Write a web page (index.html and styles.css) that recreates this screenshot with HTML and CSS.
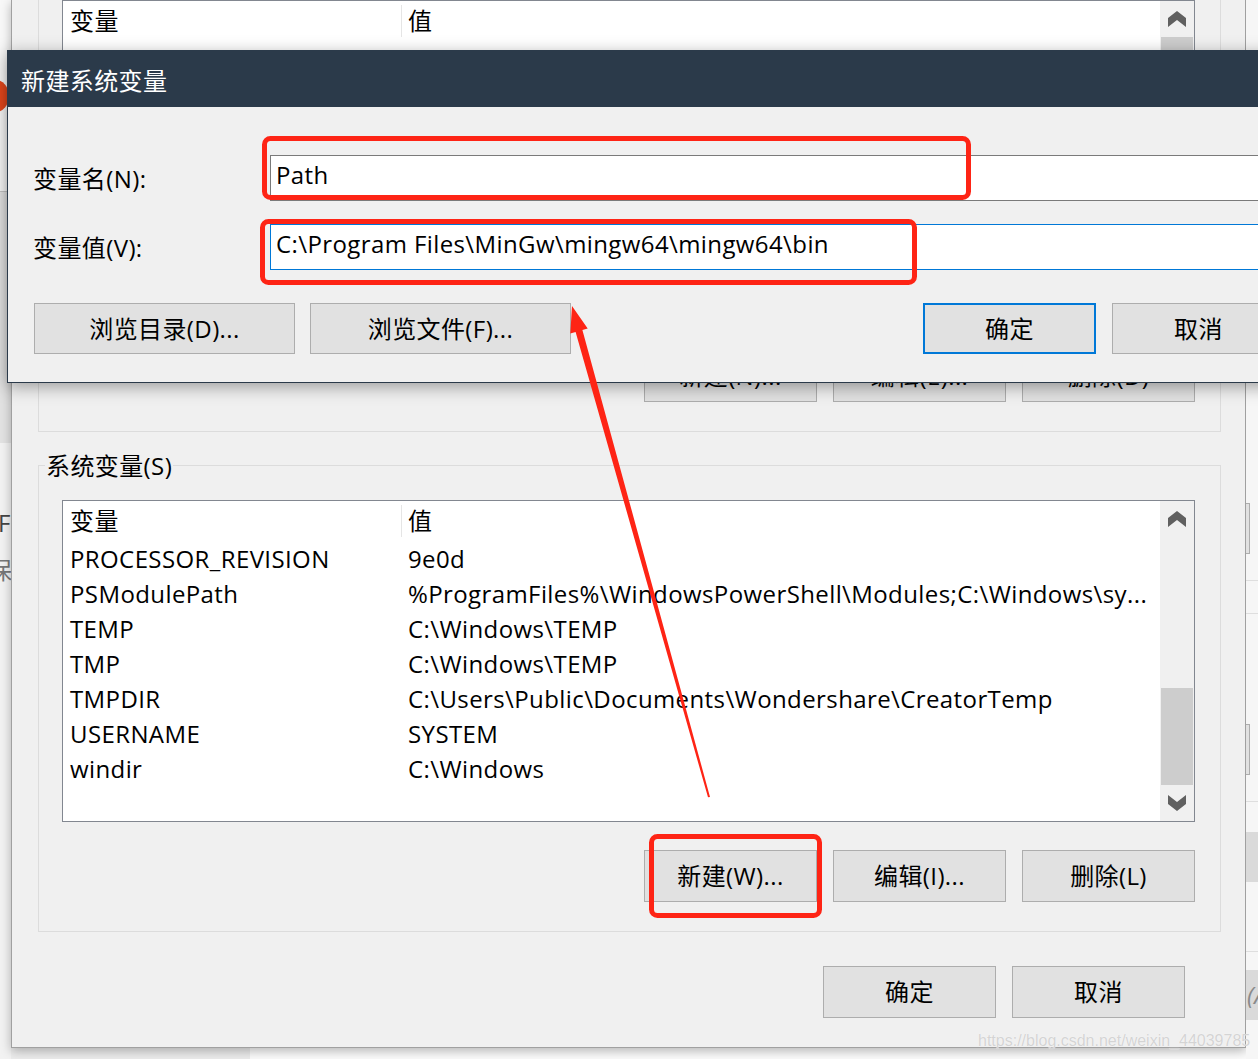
FILE: index.html
```html
<!DOCTYPE html>
<html lang="zh-CN">
<head>
  <meta charset="UTF-8">
  <meta name="viewport" content="width=device-width, initial-scale=1.0">
  <title>新建系统变量</title>
  <link rel="stylesheet" href="styles.css">
</head>
<body>

<div class="desk">

  <!-- fenêtre derrière, à gauche -->
  <div class="side side-left">
    <div class="sl-top"><span class="sl-dot"></span></div>
    <div class="sl-mid"></div>
    <div class="sl-bottom">
      <span class="sl-text">F</span>
      <span class="sl-text sl-cut">保</span>
    </div>
  </div>

  <!-- fenêtre "环境变量" -->
  <div class="env-window">

    <div class="group group-user">
      <div class="list">
        <div class="list-body">
          <div class="list-head">
            <span class="col-name">变量</span>
            <span class="col-value">值</span>
          </div>
          <div class="row"></div>
        </div>
        <div class="scrollbar">
          <div class="sb-btn">
            <svg width="18" height="16" viewBox="0 0 18 16"><polygon points="0,7 9,0 18,7 18,16 9,9 0,16" fill="#606060"/></svg>
          </div>
          <div class="sb-track">
            <div class="sb-thumb thumb-user"></div>
          </div>
        </div>
      </div>
      <div class="btn-row">
        <button class="btn">新建(N)...</button>
        <button class="btn">编辑(E)...</button>
        <button class="btn">删除(D)</button>
      </div>
    </div>

    <div class="group group-sys">
      <div class="group-title">系统变量(S)</div>
      <div class="list">
        <div class="list-body">
          <div class="list-head">
            <span class="col-name">变量</span>
            <span class="col-value">值</span>
          </div>
          <div class="row">
            <span class="col-name">PROCESSOR_REVISION</span>
            <span class="col-value">9e0d</span>
          </div>
          <div class="row">
            <span class="col-name">PSModulePath</span>
            <span class="col-value">%ProgramFiles%\WindowsPowerShell\Modules;C:\Windows\sy...</span>
          </div>
          <div class="row">
            <span class="col-name">TEMP</span>
            <span class="col-value">C:\Windows\TEMP</span>
          </div>
          <div class="row">
            <span class="col-name">TMP</span>
            <span class="col-value">C:\Windows\TEMP</span>
          </div>
          <div class="row">
            <span class="col-name">TMPDIR</span>
            <span class="col-value">C:\Users\Public\Documents\Wondershare\CreatorTemp</span>
          </div>
          <div class="row">
            <span class="col-name">USERNAME</span>
            <span class="col-value">SYSTEM</span>
          </div>
          <div class="row">
            <span class="col-name">windir</span>
            <span class="col-value">C:\Windows</span>
          </div>
        </div>
        <div class="scrollbar">
          <div class="sb-btn">
            <svg width="18" height="16" viewBox="0 0 18 16"><polygon points="0,7 9,0 18,7 18,16 9,9 0,16" fill="#606060"/></svg>
          </div>
          <div class="sb-track sb-end">
            <div class="sb-thumb" style="height: 97px;"></div>
          </div>
          <div class="sb-btn">
            <svg width="18" height="16" viewBox="0 0 18 16"><polygon points="0,0 9,7 18,0 18,9 9,16 0,9" fill="#606060"/></svg>
          </div>
        </div>
      </div>
      <div class="btn-row">
        <button class="btn">新建(W)...</button>
        <button class="btn">编辑(I)...</button>
        <button class="btn">删除(L)</button>
      </div>
    </div>

    <div class="footer">
      <button class="btn">确定</button>
      <button class="btn">取消</button>
    </div>
  </div>

  <!-- fenêtre derrière, à droite -->
  <div class="side side-right">
    <div class="sr-box sr-b1"></div>
    <div class="sr-line sr-l1"></div>
    <div class="sr-line sr-l2"></div>
    <div class="sr-box sr-b2"></div>
    <div class="sr-line sr-l3"></div>
    <div class="sr-band sr-g1"></div>
    <div class="sr-line sr-l4"></div>
    <div class="sr-band sr-g2"><span>(A</span></div>
  </div>

  <!-- boîte de dialogue "新建系统变量" -->
  <div class="dialog">
    <div class="dialog-title">新建系统变量</div>
    <div class="dialog-body">
      <div class="field">
        <span class="field-label">变量名(N):</span>
        <div class="field-box">Path</div>
      </div>
      <div class="field">
        <span class="field-label">变量值(V):</span>
        <div class="field-box focus">C:\Program Files\MinGw\mingw64\mingw64\bin</div>
      </div>
      <div class="dialog-actions">
        <button class="btn btn-wide">浏览目录(D)...</button>
        <button class="btn btn-wide">浏览文件(F)...</button>
        <button class="btn btn-ok">确定</button>
        <button class="btn btn-cancel">取消</button>
      </div>
    </div>
  </div>

  <div class="watermark">https://blog.csdn.net/weixin_44039785</div>

  <!-- annotations rouges -->
  <svg class="marks" width="1258" height="1059" viewBox="0 0 1258 1059">
    <rect x="264.5" y="138.5" width="704" height="59" rx="6" />
    <rect x="262.5" y="221.5" width="652" height="61" rx="6" />
    <rect x="651.5" y="836.5" width="168" height="79" rx="6" />
    <polygon class="arrow" points="710,797 582.4,330 587.7,328.6 572,306 570.3,333.4 575.6,332 708,797.3" />
  </svg>

</div>

</body>
</html>
```

FILE: styles.css
```css
/* BASE */
* {
  box-sizing: border-box;
}
html, body {
  margin: 0;
  padding: 0;
}
body {
  width: 1258px;
  height: 1059px;
  overflow: hidden;
  font-family: "Open Sans", "Noto Sans CJK SC", sans-serif;
  font-size: 24px;
  letter-spacing: 0.4px;
  color: #000;
  background: linear-gradient(to right, #ececec 250px, #fbfbfb 250px);
}
.desk {
  position: relative;
  display: flex;
  align-items: flex-start;
  height: 1059px;
}

/* FENETRES DERRIERE */
.side {
  flex: none;
  height: 1059px;
  overflow: hidden;
  display: flex;
  flex-direction: column;
}
.side-left { width: 11px; }
.sl-top {
  height: 192px;
  background: #f8f8f8;
  border-bottom: 1px solid #c4c4c4;
  padding-top: 80px;
}
.sl-dot {
  display: block;
  width: 26px;
  height: 32px;
  margin-left: -17px;
  border-radius: 50%;
  background: #e4471c;
}
.sl-mid {
  height: 251px;
  background: #e2e2e2;
}
.sl-bottom {
  flex: 1;
  background: #f2f2f2;
  padding-top: 62px;
  display: flex;
  flex-direction: column;
}
.sl-text {
  color: #444;
  line-height: 36px;
  margin-left: -2px;
}
.sl-cut {
  margin: 11px 0 0 -12px;
  color: #777;
}

.side-right {
  width: 12px;
  background: #f6f6f6;
}
.sr-box {
  flex: none;
  width: 4px;
  height: 51px;
  background: #e1e1e1;
  border: 1px solid #adadad;
  border-left: 0;
}
.sr-b1 { margin-top: 503px; }
.sr-b2 { margin-top: 110px; }
.sr-line {
  flex: none;
  height: 1px;
  background: #dedede;
}
.sr-l1 { margin-top: 26px; }
.sr-l2 { margin-top: 32px; }
.sr-l3 { margin-top: 26px; }
.sr-l4 { margin-top: 69px; }
.sr-band {
  flex: none;
  height: 50px;
  background: #dadada;
}
.sr-g1 { margin-top: 30px; }
.sr-g2 {
  margin-top: 18px;
  font-style: italic;
  color: #8a8a8a;
  line-height: 50px;
  padding-left: 1px;
}

/* FENETRE PRINCIPALE */
.env-window {
  flex: none;
  width: 1235px;
  height: 1048px;
  background: #f0f0f0;
  border: 1px solid #a0a0a0;
  border-top: 0;
  box-shadow: 0 3px 10px rgba(0,0,0,0.28);
  padding: 0 24px 0 26px;
}
.group {
  border: 1px solid #dcdcdc;
  padding: 0 25px 29px 23px;
}
.group-user { border-top: 0; }
.group-sys { margin-top: 33px; }
.group-title {
  width: fit-content;
  margin: -15px 0 19px -17px;
  padding: 0 1px;
  line-height: 30px;
  background: #f0f0f0;
}

/* LISTE */
.list {
  display: flex;
  height: 322px;
  background: #fff;
  border: 1px solid #828790;
}
.list-body {
  flex: 1;
  min-width: 0;
}
.list-head, .row {
  display: flex;
  align-items: center;
  white-space: nowrap;
  line-height: 32px;
}
.list-head { height: 40px; }
.row { height: 35px; }
.col-name {
  flex: none;
  width: 339px;
  padding-left: 7px;
}
.list-head .col-name { border-right: 1px solid #e5e5e5; }
.col-value {
  flex: 1;
  min-width: 0;
  padding-left: 6px;
  overflow: hidden;
}

/* BARRE DE DEFILEMENT */
.scrollbar {
  flex: none;
  width: 34px;
  background: #f0f0f0;
  display: flex;
  flex-direction: column;
}
.sb-btn {
  flex: none;
  height: 36px;
  display: flex;
  align-items: center;
  justify-content: center;
}
.sb-track {
  flex: 1;
  display: flex;
  flex-direction: column;
  padding: 0 1px;
}
.sb-end { justify-content: flex-end; }
.sb-thumb { background: #cdcdcd; }
.thumb-user { height: 160px; }

/* BOUTONS */
.btn {
  flex: none;
  width: 173px;
  height: 52px;
  padding: 0;
  margin: 0;
  font: inherit;
  letter-spacing: inherit;
  line-height: 32px;
  color: #000;
  background: #e1e1e1;
  border: 1px solid #adadad;
  border-radius: 0;
}
.btn-row {
  display: flex;
  justify-content: flex-end;
  gap: 16px;
  margin-top: 28px;
}
.footer {
  display: flex;
  justify-content: flex-end;
  gap: 16px;
  margin-top: 34px;
  padding-right: 36px;
}

/* DIALOGUE */
.dialog {
  position: absolute;
  left: 7px;
  top: 50px;
  width: 1300px;
  background: #f0f0f0;
  border: 1px solid #2b3a4a;
  box-shadow: 0 4px 16px rgba(0,0,0,0.35);
}
.dialog-title {
  height: 56px;
  display: flex;
  align-items: center;
  padding-left: 13px;
  color: #fff;
  background: #2b3a4a;
}
.dialog-body {
  padding: 48px 0 28px 25px;
}
.field {
  display: flex;
  align-items: center;
}
.field + .field { margin-top: 23px; }
.field-label {
  flex: none;
  width: 237px;
  padding-bottom: 2px;
}
.field-box {
  flex: 1;
  height: 46px;
  display: flex;
  align-items: center;
  padding: 0 0 7px 5px;
  white-space: nowrap;
  background: #fff;
  border: 1px solid #7a7a7a;
}
.field-box.focus { border-color: #0078d7; }
.dialog-actions {
  display: flex;
  margin-top: 33px;
}
.btn-wide {
  width: 261px;
  height: 51px;
}
.btn-wide:first-child { margin-left: 1px; }
.btn-wide + .btn-wide { margin-left: 15px; }
.btn-ok {
  height: 51px;
  margin-left: 352px;
  border: 2px solid #0078d7;
}
.btn-cancel {
  height: 51px;
  margin-left: 16px;
}

/* FILIGRANE */
.watermark {
  position: absolute;
  left: 978px;
  top: 1032px;
  font-family: "Liberation Sans", sans-serif;
  font-size: 16px;
  letter-spacing: 0;
  color: #d4d4d4;
  text-shadow: 0 0 1px #fff;
}

/* ANNOTATIONS */
.marks {
  position: absolute;
  top: 0;
  left: 0;
  pointer-events: none;
}
.marks rect {
  fill: none;
  stroke: #fe2415;
  stroke-width: 5;
}
.marks .arrow { fill: #fe2415; }
```
